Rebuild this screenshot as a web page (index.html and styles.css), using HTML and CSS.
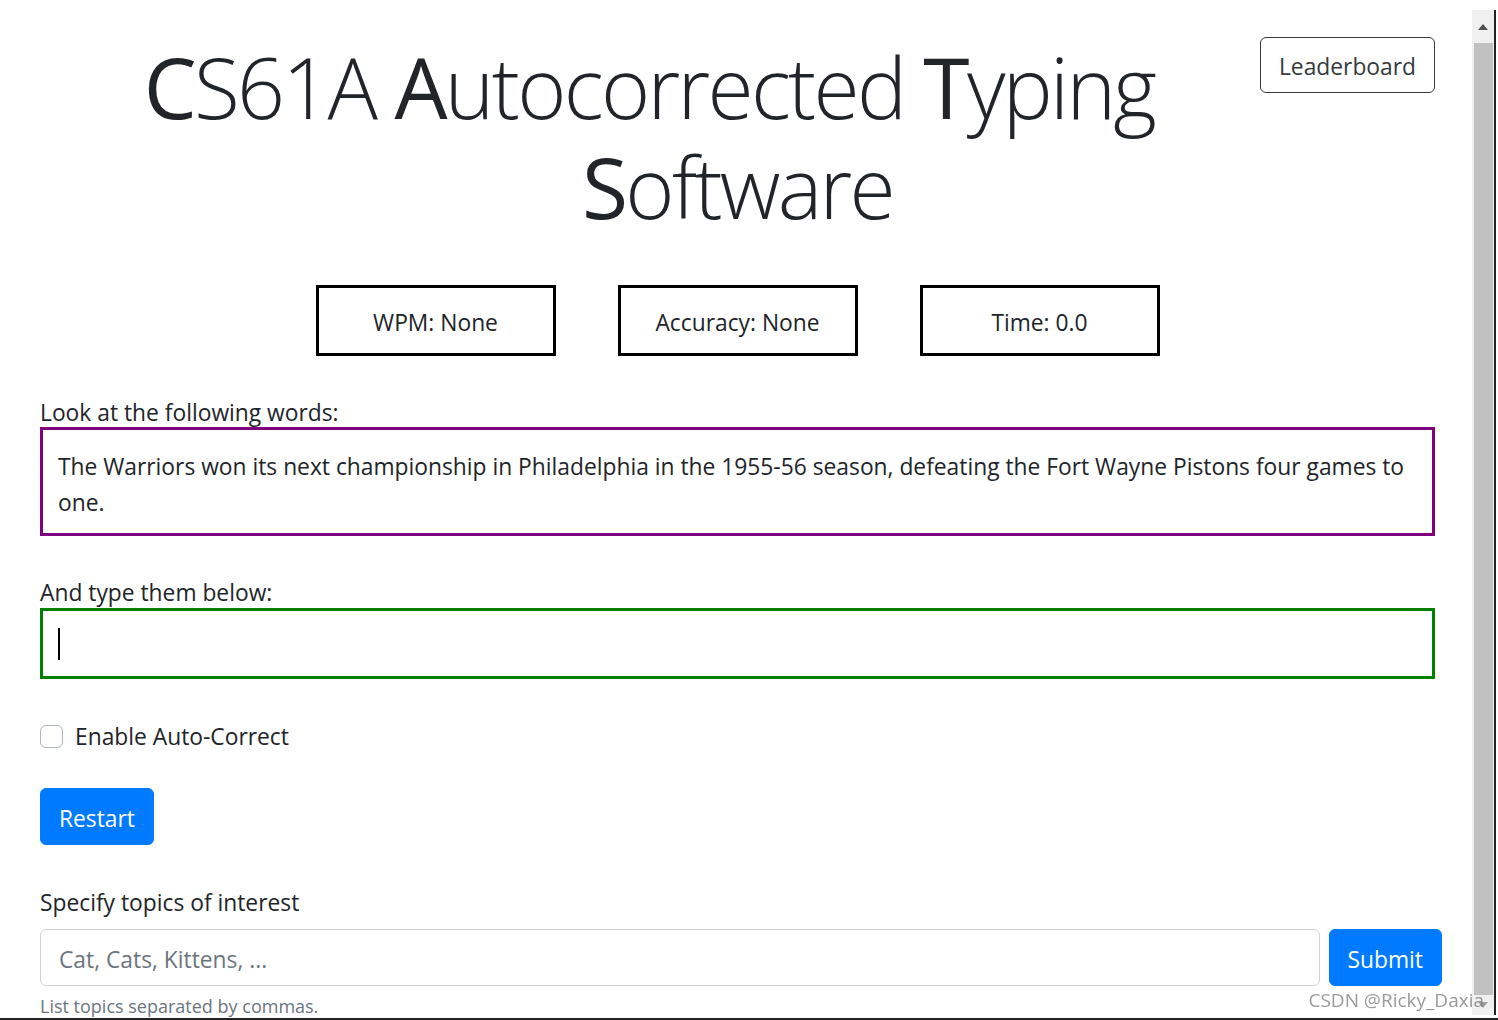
FILE: index.html
```html
<!DOCTYPE html>
<html lang="en">
<head>
  <meta charset="UTF-8">
  <title>CS61A Autocorrected Typing Software</title>
  <link rel="stylesheet" href="styles.css">
</head>
<body>
  <div class="page">
    <header class="top">
      <button class="btn-leaderboard" type="button">Leaderboard</button>
      <h1 class="title"><strong>C</strong>S61A <strong>A</strong>utocorrected <strong>T</strong>yping <strong>S</strong>oftware</h1>
    </header>

    <div class="stats">
      <div class="stat">WPM: None</div>
      <div class="stat">Accuracy: None</div>
      <div class="stat">Time: 0.0</div>
    </div>

    <div class="section">
      <div class="label">Look at the following words:</div>
      <div class="prompt">The Warriors won its next championship in Philadelphia in the 1955-56 season, defeating the Fort Wayne Pistons four games to one.</div>
    </div>

    <div class="section">
      <div class="label">And type them below:</div>
      <div class="typed"><span class="caret"></span></div>
    </div>

    <label class="check-row">
      <span class="check-box"></span>
      <span class="check-text">Enable Auto-Correct</span>
    </label>

    <div class="section restart">
      <button class="btn-primary" type="button">Restart</button>
    </div>

    <div class="section topics">
      <div class="label topics-label">Specify topics of interest</div>
      <div class="topics-row">
        <input class="topics-input" type="text" placeholder="Cat, Cats, Kittens, ...">
        <button class="btn-primary" type="button">Submit</button>
      </div>
      <small class="hint">List topics separated by commas.</small>
    </div>
  </div>

  <div class="scrollbar">
    <div class="arrow-up"></div>
    <div class="thumb"></div>
    <div class="arrow-down"></div>
  </div>

  <div class="watermark">CSDN @Ricky_Daxia</div>
</body>
</html>
```

FILE: styles.css
```css
html, body {
  margin: 0;
  height: 100%;
  overflow: hidden;
  background: #fff;
}

body {
  font-family: "Open Sans", "Noto Sans", sans-serif;
  font-size: 22.8px;
  line-height: 36px;
  color: #212529;
  border-bottom: 2px solid #222;
  box-sizing: border-box;
}

.page {
  padding: 37px 63px 0 40px;
}

/* header */
.top {
  overflow: hidden;
}

.btn-leaderboard {
  float: right;
  font-family: inherit;
  font-size: 22.8px;
  line-height: 36px;
  padding: 11px 18px 7px 18px;
  color: #343a40;
  background: #fff;
  border: 1.5px solid #343a40;
  border-radius: 6px;
  margin-left: 2px;
}

.title {
  margin: 0;
  font-size: 84px;
  line-height: 100px;
  font-weight: 300;
  letter-spacing: -2.7px;
  text-align: center;
  color: #212529;
}

.title strong {
  font-weight: 400;
}

/* stats */
.stats {
  display: flex;
  justify-content: center;
  gap: 62px;
  margin-top: 48px;
}

.stat {
  width: 234px;
  height: 61px;
  padding-top: 4px;
  border: 3px solid #000;
  display: flex;
  align-items: center;
  justify-content: center;
}

.section {
  margin-top: 35px;
}

.label {
  height: 36px;
  box-sizing: border-box;
  padding-top: 4px;
}

.prompt {
  border: 3px solid #800080;
  padding: 19px 15px 12px 15px;
}

.typed {
  margin-top: 1px;
  border: 3px solid #008000;
  height: 65px;
  display: flex;
  align-items: center;
  padding-left: 15px;
}

.caret {
  width: 1.5px;
  height: 32px;
  background: #000;
}

/* checkbox */
.check-row {
  margin-top: 38px;
  display: flex;
  align-items: center;
  gap: 12px;
}

.check-text {
  padding-top: 2px;
}

.check-box {
  width: 21px;
  height: 21px;
  border: 1.5px solid #adb5bd;
  border-radius: 6px;
  background: #fff;
}

.btn-primary {
  font-family: inherit;
  font-size: 22.8px;
  line-height: 36px;
  padding: 12px 18px 7px 18px;
  color: #fff;
  background: #007bff;
  border: 1.5px solid #007bff;
  border-radius: 6px;
}

.restart {
  margin-top: 33px;
}

/* topics */
.topics {
  margin-top: 36px;
}

.topics-label {
  margin-bottom: 12px;
}

.topics-row {
  display: flex;
  gap: 9px;
  margin-right: -7px;
}

.topics-input {
  flex: 1;
  font-family: inherit;
  font-size: 22.8px;
  line-height: 36px;
  padding: 11px 18px 7px 18px;
  height: 57px;
  box-sizing: border-box;
  border: 1.5px solid #ced4da;
  border-radius: 6px;
  color: #495057;
}

.topics-input::placeholder {
  color: #6c757d;
}

.hint {
  display: block;
  margin-top: 6px;
  font-size: 18px;
  line-height: 28px;
  color: #6c757d;
}

.watermark {
  position: fixed;
  right: 14px;
  bottom: 8px;
  font-size: 19px;
  line-height: 24px;
  color: rgba(120, 120, 120, 0.75);
}

/* fake window scrollbar */
.scrollbar {
  position: fixed;
  top: 10px;
  right: 2px;
  bottom: 5px;
  width: 22px;
  background: #f0f0f0;
  display: flex;
  flex-direction: column;
  border-right: 2px solid #222;
}

.arrow-up, .arrow-down {
  height: 33px;
  display: flex;
  justify-content: center;
  align-items: center;
}

.arrow-up::before {
  content: "";
  border-left: 5px solid transparent;
  border-right: 5px solid transparent;
  border-bottom: 6px solid #505050;
}

.arrow-down {
  height: 20px;
}

.arrow-down::before {
  content: "";
  border-left: 5px solid transparent;
  border-right: 5px solid transparent;
  border-top: 6px solid #a0a0a0;
}

.thumb {
  flex: 1;
  margin: 0 1px 0 2px;
  background: #c1c1c1;
}
```
